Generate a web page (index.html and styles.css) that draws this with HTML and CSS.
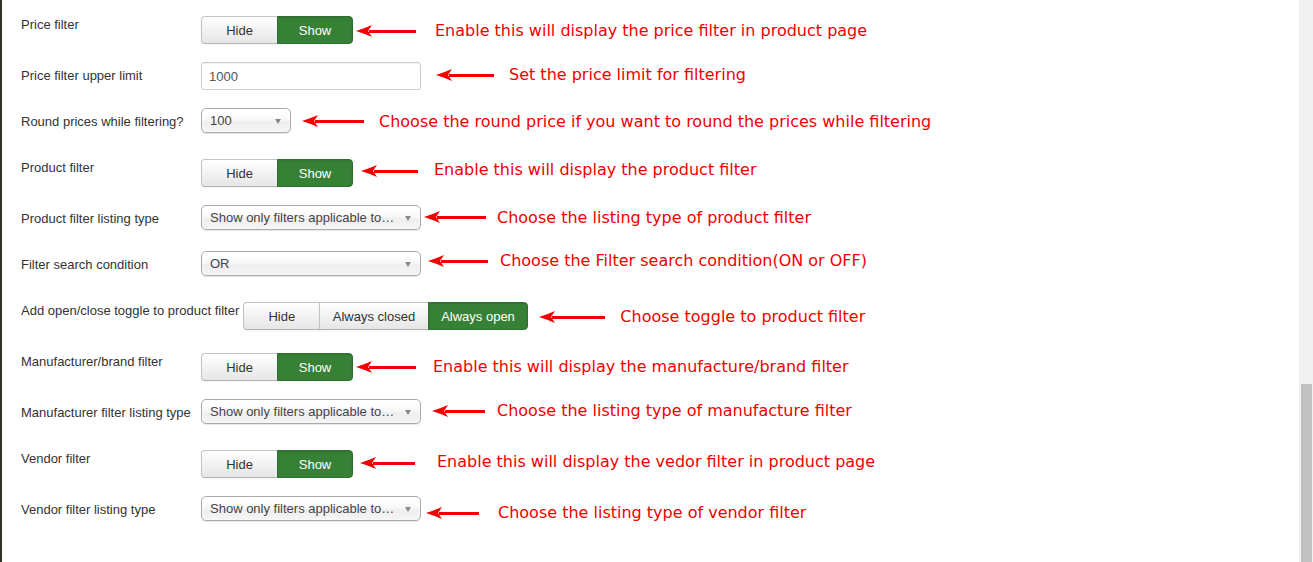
FILE: index.html
```html
<!DOCTYPE html>
<html>
<head>
<meta charset="utf-8">
<link rel="stylesheet" href="styles.css">
</head>
<body>
<div class="page">
  <div class="form">
    <div class="row row-btn">
      <div class="lbl">Price filter</div>
      <div class="ctrl"><div class="btn-group"><span class="btn">Hide</span><span class="btn active">Show</span></div></div>
      <div class="note n1"><span class="arrow"><svg class="head" width="16" height="12" viewBox="0 0 16 12"><path d="M0 6 Q8 3.5 16 0 L12 6 L16 12 Q8 8.5 0 6Z"/></svg><span class="shaft"></span></span><span class="txt">Enable this will display the price filter in product page</span></div>
    </div>
    <div class="row">
      <div class="lbl">Price filter upper limit</div>
      <div class="ctrl"><div class="input">1000</div></div>
      <div class="note n2"><span class="arrow"><svg class="head" width="16" height="12" viewBox="0 0 16 12"><path d="M0 6 Q8 3.5 16 0 L12 6 L16 12 Q8 8.5 0 6Z"/></svg><span class="shaft"></span></span><span class="txt">Set the price limit for filtering</span></div>
    </div>
    <div class="row">
      <div class="lbl">Round prices while filtering?</div>
      <div class="ctrl"><div class="select small"><span class="val">100</span><span class="caret"></span></div></div>
      <div class="note n3"><span class="arrow"><svg class="head" width="16" height="12" viewBox="0 0 16 12"><path d="M0 6 Q8 3.5 16 0 L12 6 L16 12 Q8 8.5 0 6Z"/></svg><span class="shaft"></span></span><span class="txt">Choose the round price if you want to round the prices while filtering</span></div>
    </div>
    <div class="row row-btn">
      <div class="lbl">Product filter</div>
      <div class="ctrl"><div class="btn-group"><span class="btn">Hide</span><span class="btn active">Show</span></div></div>
      <div class="note n4"><span class="arrow"><svg class="head" width="16" height="12" viewBox="0 0 16 12"><path d="M0 6 Q8 3.5 16 0 L12 6 L16 12 Q8 8.5 0 6Z"/></svg><span class="shaft"></span></span><span class="txt">Enable this will display the product filter</span></div>
    </div>
    <div class="row">
      <div class="lbl">Product filter listing type</div>
      <div class="ctrl"><div class="select"><span class="val">Show only filters applicable to…</span><span class="caret"></span></div></div>
      <div class="note n5"><span class="arrow"><svg class="head" width="16" height="12" viewBox="0 0 16 12"><path d="M0 6 Q8 3.5 16 0 L12 6 L16 12 Q8 8.5 0 6Z"/></svg><span class="shaft"></span></span><span class="txt">Choose the listing type of product filter</span></div>
    </div>
    <div class="row">
      <div class="lbl">Filter search condition</div>
      <div class="ctrl"><div class="select"><span class="val">OR</span><span class="caret"></span></div></div>
      <div class="note n6"><span class="arrow"><svg class="head" width="16" height="12" viewBox="0 0 16 12"><path d="M0 6 Q8 3.5 16 0 L12 6 L16 12 Q8 8.5 0 6Z"/></svg><span class="shaft"></span></span><span class="txt">Choose the Filter search condition(ON or OFF)</span></div>
    </div>
    <div class="row row-btn">
      <div class="lbl long">Add open/close toggle to product filter</div>
      <div class="ctrl"><div class="btn-group wide"><span class="btn">Hide</span><span class="btn">Always closed</span><span class="btn active">Always open</span></div></div>
      <div class="note n7"><span class="arrow"><svg class="head" width="16" height="12" viewBox="0 0 16 12"><path d="M0 6 Q8 3.5 16 0 L12 6 L16 12 Q8 8.5 0 6Z"/></svg><span class="shaft"></span></span><span class="txt">Choose toggle to product filter</span></div>
    </div>
    <div class="row row-btn">
      <div class="lbl">Manufacturer/brand filter</div>
      <div class="ctrl"><div class="btn-group"><span class="btn">Hide</span><span class="btn active">Show</span></div></div>
      <div class="note n8"><span class="arrow"><svg class="head" width="16" height="12" viewBox="0 0 16 12"><path d="M0 6 Q8 3.5 16 0 L12 6 L16 12 Q8 8.5 0 6Z"/></svg><span class="shaft"></span></span><span class="txt">Enable this will display the manufacture/brand filter</span></div>
    </div>
    <div class="row">
      <div class="lbl">Manufacturer filter listing type</div>
      <div class="ctrl"><div class="select"><span class="val">Show only filters applicable to…</span><span class="caret"></span></div></div>
      <div class="note n9"><span class="arrow"><svg class="head" width="16" height="12" viewBox="0 0 16 12"><path d="M0 6 Q8 3.5 16 0 L12 6 L16 12 Q8 8.5 0 6Z"/></svg><span class="shaft"></span></span><span class="txt">Choose the listing type of manufacture filter</span></div>
    </div>
    <div class="row row-btn">
      <div class="lbl">Vendor filter</div>
      <div class="ctrl"><div class="btn-group"><span class="btn">Hide</span><span class="btn active">Show</span></div></div>
      <div class="note n10"><span class="arrow"><svg class="head" width="16" height="12" viewBox="0 0 16 12"><path d="M0 6 Q8 3.5 16 0 L12 6 L16 12 Q8 8.5 0 6Z"/></svg><span class="shaft"></span></span><span class="txt">Enable this will display the vedor filter in product page</span></div>
    </div>
    <div class="row">
      <div class="lbl">Vendor filter listing type</div>
      <div class="ctrl"><div class="select"><span class="val">Show only filters applicable to…</span><span class="caret"></span></div></div>
      <div class="note n11"><span class="arrow"><svg class="head" width="16" height="12" viewBox="0 0 16 12"><path d="M0 6 Q8 3.5 16 0 L12 6 L16 12 Q8 8.5 0 6Z"/></svg><span class="shaft"></span></span><span class="txt">Choose the listing type of vendor filter</span></div>
    </div>
  </div>
  <div class="scrollbar"><div class="thumb"></div></div>
</div>
</body>
</html>
```

FILE: styles.css
```css
html, body {
  margin: 0;
  padding: 0;
  background: #fff;
  overflow: hidden;
}

.page {
  position: relative;
  height: 562px;
  border-left: 2px solid #30352a;
  box-sizing: border-box;
  font-family: "Liberation Sans", Arial, sans-serif;
  font-size: 13px;
  color: #333;
}

.form {
  padding: 11px 0 0 19px;
}

.row {
  display: flex;
  align-items: flex-start;
  min-height: 28px;
  margin-bottom: 18px;
}

.row-btn {
  min-height: 33px;
}

.lbl {
  min-width: 180px;
  padding-top: 5px;
  line-height: 18px;
  white-space: nowrap;
}

.lbl.long {
  min-width: 0;
  margin-right: 4px;
}

.row-btn .ctrl {
  padding-top: 5px;
}

/* button groups */
.btn-group {
  display: flex;
  height: 28px;
}

.btn {
  box-sizing: border-box;
  min-width: 76px;
  height: 28px;
  padding: 0 12.5px;
  display: flex;
  align-items: center;
  justify-content: center;
  border: 1px solid #c4c4c4;
  border-bottom-color: #b3b3b3;
  background: linear-gradient(#ffffff, #e6e6e6);
  box-shadow: inset 0 1px 0 rgba(255, 255, 255, 0.2), 0 1px 2px rgba(0, 0, 0, 0.05);
  color: #333;
  white-space: nowrap;
}

.btn + .btn {
  margin-left: -1px;
}

.btn:first-child {
  min-width: 77px;
  border-radius: 4px 0 0 4px;
}

.btn:last-child {
  border-radius: 0 4px 4px 0;
}

.btn.active {
  background: #378137;
  border-color: #2f6f2f;
  color: #fff;
  box-shadow: inset 0 1px 2px rgba(0, 0, 0, 0.1);
}

/* text input */
.input {
  box-sizing: border-box;
  width: 220px;
  height: 28px;
  padding: 0 7px;
  display: flex;
  align-items: center;
  border: 1px solid #ccc;
  border-radius: 3px;
  color: #555;
  box-shadow: inset 0 1px 1px rgba(0, 0, 0, 0.05);
}

/* chosen-like select */
.select {
  box-sizing: border-box;
  width: 220px;
  height: 25px;
  padding: 0 9px 0 8px;
  display: flex;
  align-items: center;
  justify-content: space-between;
  border: 1px solid #aaa;
  border-radius: 5px;
  background: linear-gradient(#ffffff 20%, #f6f6f6 50%, #eeeeee 52%, #f4f4f4 100%);
  box-shadow: inset 0 0 3px #fff, 0 1px 1px rgba(0, 0, 0, 0.1);
  color: #444;
  white-space: nowrap;
}

.select.small {
  width: 90px;
}

.caret {
  width: 0;
  height: 0;
  border-left: 3.5px solid transparent;
  border-right: 3.5px solid transparent;
  border-top: 5px solid #888;
  margin-top: 1px;
}

/* red annotations */
.note {
  display: flex;
  align-items: center;
  height: 20px;
  margin-left: var(--ml);
  margin-top: var(--mt);
  color: #f20000;
  font-family: "DejaVu Sans", Verdana, sans-serif;
  font-size: 16px;
  white-space: nowrap;
}

.arrow {
  display: flex;
  align-items: center;
  width: var(--len);
  margin-right: var(--gap);
}

.head {
  display: block;
  fill: #f20000;
  flex: none;
}

.shaft {
  flex: 1;
  height: 3px;
  background: #f20000;
  margin-left: -3px;
}

.txt {
  line-height: 20px;
  margin-top: var(--tt, 0);
}

.n1 { --ml: 3px; --len: 60px; --gap: 19px; --mt: 10px; }
.n2 { --ml: 15px; --len: 58px; --gap: 15px; --mt: 3px; }
.n3 { --ml: 11px; --len: 62px; --gap: 15px; --mt: 3px; --tt: 1px; }
.n4 { --ml: 8px; --len: 57px; --gap: 16px; --mt: 7px; --tt: -3px; }
.n5 { --ml: 3px; --len: 62px; --gap: 11px; --mt: 2px; --tt: 1px; }
.n6 { --ml: 7px; --len: 60px; --gap: 12px; --mt: 0px; }
.n7 { --ml: 11px; --len: 66px; --gap: 15px; --mt: 10px; }
.n8 { --ml: 3px; --len: 60px; --gap: 17px; --mt: 9px; }
.n9 { --ml: 11px; --len: 53px; --gap: 12px; --mt: 2px; }
.n10 { --ml: 7px; --len: 55px; --gap: 22px; --mt: 8px; --tt: -2px; }
.n11 { --ml: 5px; --len: 53px; --gap: 19px; --mt: 7px; }

/* window scrollbar */
.scrollbar {
  position: absolute;
  top: 0;
  right: 0;
  bottom: 0;
  width: 14px;
  background: #f1f1f1;
}

.thumb {
  position: absolute;
  top: 384px;
  left: 2px;
  right: 1px;
  bottom: 0;
  background: #c1c1c1;
}
```
